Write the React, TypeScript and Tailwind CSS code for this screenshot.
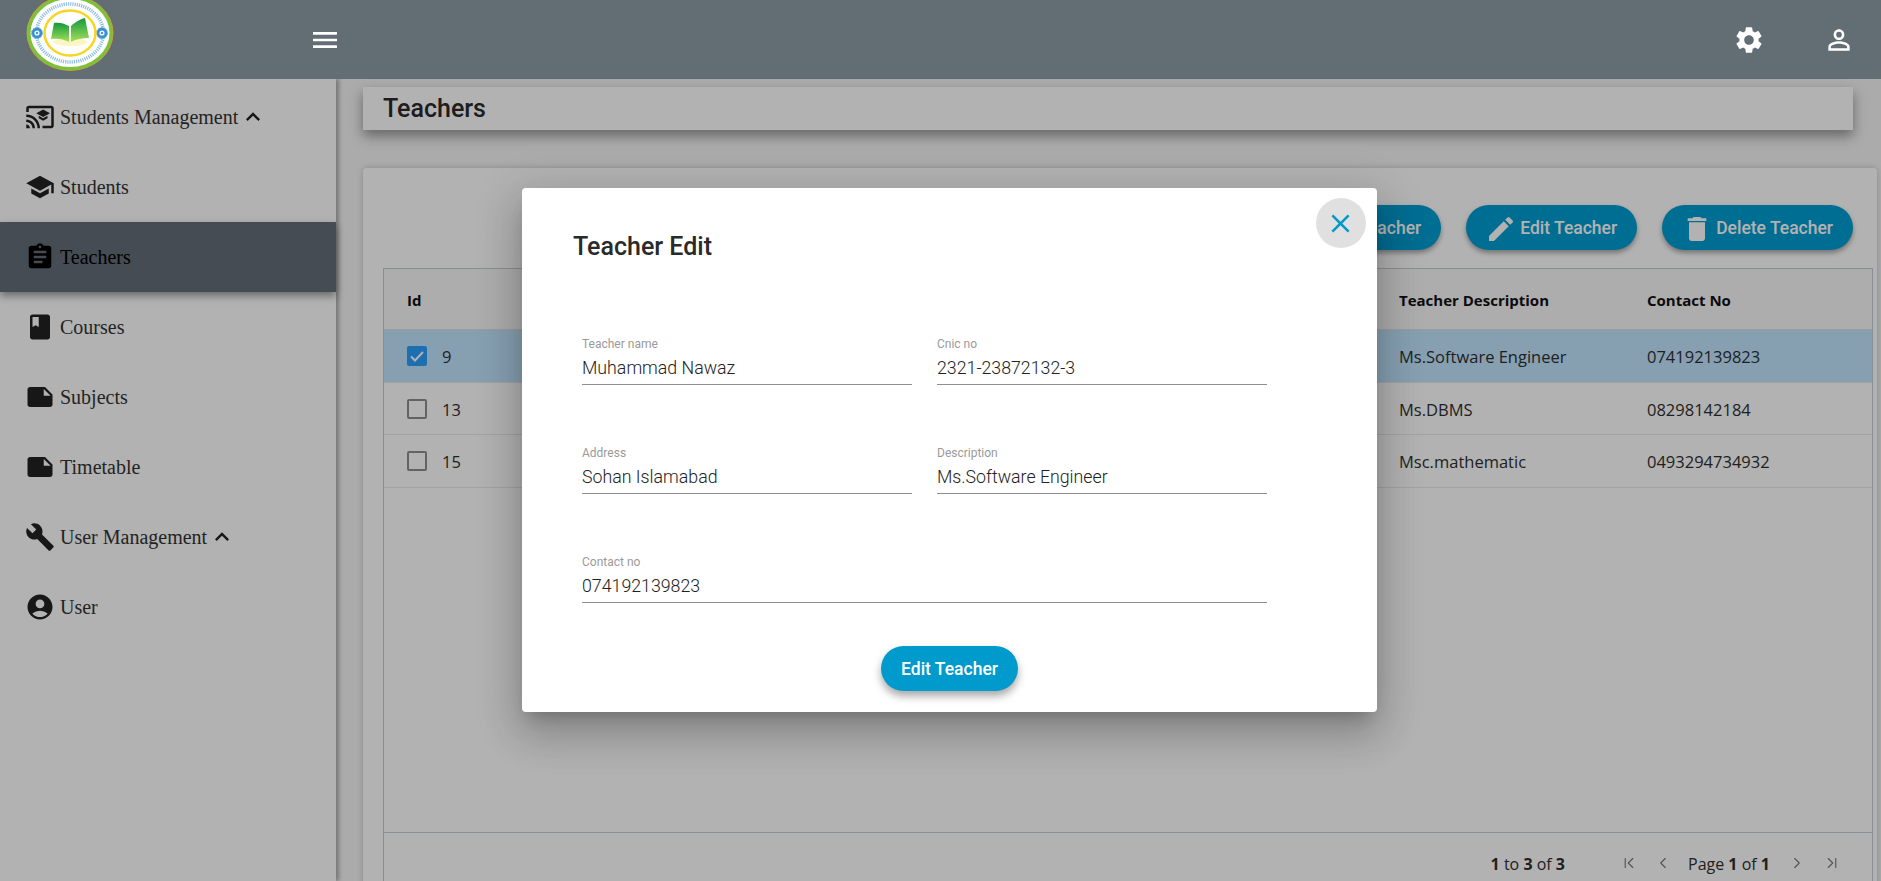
import {
  MdAccountCircle,
  MdAdd,
  MdAssignment,
  MdBook,
  MdBuild,
  MdCastForEducation,
  MdClose,
  MdDelete,
  MdEdit,
  MdKeyboardArrowUp,
  MdMenu,
  MdNote,
  MdPersonOutline,
  MdSchool,
  MdSettings,
} from 'react-icons/md'
import { ChevronFirst, ChevronLast, ChevronLeft, ChevronRight } from 'lucide-react'
import type { IconType } from 'react-icons'

/* Navigation data */
interface NavItem {
  icon: IconType
  label: string
  chevron?: boolean
  active?: boolean
}

const navItems: NavItem[] = [
  { icon: MdCastForEducation, label: 'Students Management', chevron: true },
  { icon: MdSchool, label: 'Students' },
  { icon: MdAssignment, label: 'Teachers', active: true },
  { icon: MdBook, label: 'Courses' },
  { icon: MdNote, label: 'Subjects' },
  { icon: MdNote, label: 'Timetable' },
  { icon: MdBuild, label: 'User Management', chevron: true },
  { icon: MdAccountCircle, label: 'User' },
]

const rows = [
  { id: 9, desc: 'Ms.Software Engineer', contact: '074192139823', selected: true },
  { id: 13, desc: 'Ms.DBMS', contact: '08298142184' },
  { id: 15, desc: 'Msc.mathematic', contact: '0493294734932' },
]

function Flower({ cx, cy }: { cx: number; cy: number }) {
  return (
    <g>
      <circle cx={cx} cy={cy} r="5.5" fill="#3b8fd0" strokeDasharray="2 1" stroke="#6fb2e4" strokeWidth="1" />
      <circle cx={cx} cy={cy} r="2.6" fill="#e8f3fb" />
      <circle cx={cx} cy={cy} r="1.1" fill="#2f7fc4" />
    </g>
  )
}

function Logo() {
  return (
    <svg viewBox="0 0 88 76" className="w-[88px] h-[76px] shrink-0">
      <defs>
        <linearGradient id="page" x1="0" y1="0" x2="0" y2="1">
          <stop offset="0" stopColor="#12993a" />
          <stop offset="1" stopColor="#a6e05a" />
        </linearGradient>
      </defs>
      <ellipse cx="44" cy="38" rx="43.5" ry="38" fill="#dc9a35" />
      <ellipse cx="44" cy="38" rx="42.8" ry="37.3" fill="#7cc13a" />
      <ellipse cx="44" cy="38" rx="39.5" ry="34" fill="#fff" />
      <ellipse cx="44" cy="38" rx="33.5" ry="29" fill="none" stroke="#8fbfe2" strokeWidth="3.5" strokeDasharray="1.2 1" />
      <Flower cx={11} cy={38} />
      <Flower cx={76} cy={38} />
      <ellipse cx="44" cy="38" rx="25.5" ry="22.5" fill="#fff" stroke="#f9d423" strokeWidth="2.5" />
      <ellipse cx="44" cy="47" rx="17" ry="4" fill="#fdf6c4" />
      <path d="M43 31c-5-3-11-4-15-3l-3 16c6-1 13 0 18 3z" fill="url(#page)" />
      <path d="M45 31c3-3 9-7 14-8l4 20c-6 0-13 1-18 4z" fill="url(#page)" />
    </svg>
  )
}

function ToolbarButton({ icon: Icon, label }: { icon: IconType; label: string }) {
  return (
    <button className="flex items-center gap-[3px] h-[45px] pl-[19px] pr-[20px] rounded-full bg-[#009dd1] text-white text-[17.5px] font-medium shadow-[0_3px_5px_rgba(0,0,0,0.35)]">
      <Icon size={32} className="mt-[2px]" />
      <span className="pt-[1px]">{label}</span>
    </button>
  )
}

function Field({ label, value, wide }: { label: string; value: string; wide?: boolean }) {
  return (
    <div className={wide ? 'col-span-2 border-b border-[#8f8f8f]' : 'border-b border-[#8f8f8f]'}>
      <div className="text-[12px] leading-[16px] text-[#9a9a9a]">{label}</div>
      <div className="text-[17.75px] leading-[32px] font-light text-[#222]">{value}</div>
    </div>
  )
}

export default function App() {
  return (
    <div className="relative flex flex-col h-screen overflow-hidden bg-[#f5f5f5] font-['Roboto',sans-serif]">
      {/* Top bar sits above the backdrop */}
      <header className="relative z-20 flex items-center h-[79px] shrink-0 bg-[#626d74] text-white">
        <div className="ml-[26px] -mt-[13px]">
          <Logo />
        </div>
        <MdMenu size={32} className="ml-[195px] mt-[1px]" />
        <MdSettings size={32} className="ml-auto" />
        <MdPersonOutline size={32} className="ml-[58px] mr-[26px]" />
      </header>

      <div className="flex flex-1 min-h-0">
        {/* Sidebar */}
        <aside className="w-[336px] shrink-0 bg-white pt-[3px] shadow-[3px_0_4px_rgba(0,0,0,0.3)] z-[1] font-['Liberation_Serif',serif] text-[20px] text-[#333]">
          {navItems.map((item) => (
            <div
              key={item.label}
              className={
                item.active
                  ? 'flex items-center h-[70px] pl-[25px] bg-[#636d78] text-black shadow-[0_4px_8px_rgba(0,0,0,0.4)] relative'
                  : 'flex items-center h-[70px] pl-[25px]'
              }
            >
              <item.icon size={30} className={item.active ? 'text-black shrink-0' : 'text-[#222] shrink-0'} />
              <span className="ml-[5px]">{item.label}</span>
              {item.chevron && <MdKeyboardArrowUp size={28} className="ml-[1px] text-[#222]" />}
            </div>
          ))}
        </aside>

        {/* Main content */}
        <main className="flex-1 min-w-0 pl-[27px] pr-[4px] pt-[8px]">
          <div className="flex items-center h-[43px] mr-[24px] pl-[20px] bg-white shadow-[0_6px_12px_rgba(0,0,0,0.4)] text-[25px] font-medium text-[#2a2a2a]">
            Teachers
          </div>

          <div className="mt-[38px] pt-[37px] pl-[20px] pr-[4px] bg-white rounded-t shadow-[0_0_6px_rgba(0,0,0,0.2)]">
            <div className="flex justify-end gap-[25px] pr-[20px]">
              <ToolbarButton icon={MdAdd} label="Add Teacher" />
              <ToolbarButton icon={MdEdit} label="Edit Teacher" />
              <ToolbarButton icon={MdDelete} label="Delete Teacher" />
            </div>

            <div className="mt-[18px] border border-[#c6ccda] font-['Open_Sans',sans-serif] text-[16.5px] text-[#2f2f2f]">
              <div className="flex items-center h-[61px] bg-[#f8f8f8] border-b border-[#dcdfe3] font-bold text-[15px] text-[#111]">
                <div className="flex-1 pl-[23px] pt-[2px]">Id</div>
                <div className="w-[248px] pt-[2px]">Teacher Description</div>
                <div className="w-[225px] pt-[2px]">Contact No</div>
              </div>
              <div className="h-[503px] border-b border-[#c6ccda]">
                {rows.map((row) => (
                  <div
                    key={row.id}
                    className={
                      row.selected
                        ? 'flex items-center h-[52.7px] bg-[#c1e5ff] border-b border-[#e8e8ee]'
                        : 'flex items-center h-[52.7px] border-b border-[#e8e8ee]'
                    }
                  >
                    <div className="flex flex-1 items-center pl-[23px]">
                      {row.selected ? (
                        <span className="flex items-center justify-center w-[20px] h-[20px] rounded-[2px] bg-[#2aa0ff]">
                          <svg viewBox="0 0 20 20" className="w-[20px] h-[20px]" fill="none" stroke="#fff" strokeWidth="2">
                            <path d="M4 10.5l4 4 8-8.5" />
                          </svg>
                        </span>
                      ) : (
                        <span className="w-[20px] h-[20px] rounded-[2px] border-2 border-[#8f8f8f] bg-white" />
                      )}
                      <span className="ml-[15px] pt-[3px]">{row.id}</span>
                    </div>
                    <div className="w-[248px] pt-[3px]">{row.desc}</div>
                    <div className="w-[225px] pt-[3px]">{row.contact}</div>
                  </div>
                ))}
              </div>
              <div className="flex items-center justify-end h-[60px] pr-[31px] text-[16px]">
                <span className="pt-[1px]">
                  <b>1</b> to <b>3</b> of <b>3</b>
                </span>
                <ChevronFirst size={18} strokeWidth={1.5} className="ml-[55px] text-[#777]" />
                <ChevronLeft size={18} strokeWidth={1.5} className="ml-[16px] text-[#777]" />
                <span className="ml-[16px] pt-[1px]">
                  Page <b>1</b> of <b>1</b>
                </span>
                <ChevronRight size={18} strokeWidth={1.5} className="ml-[18px] text-[#777]" />
                <ChevronLast size={18} strokeWidth={1.5} className="ml-[17px] text-[#777]" />
              </div>
            </div>
          </div>
        </main>
      </div>

      {/* Backdrop */}
      <div className="absolute inset-0 z-10 bg-black/30" />

      {/* Dialog */}
      <div className="absolute z-30 left-[522px] top-[188px] w-[855px] h-[524px] pt-[43px] rounded-[4px] bg-white shadow-[0_11px_15px_-7px_rgba(0,0,0,0.2),0_24px_38px_3px_rgba(0,0,0,0.14),0_9px_46px_8px_rgba(0,0,0,0.12)]">
        <button className="absolute right-[11px] top-[10px] flex items-center justify-center w-[50px] h-[50px] rounded-full bg-[#e0e0e0] text-[#0099cc]">
          <MdClose size={31} className="-ml-[1px] mt-[1px]" />
        </button>
        <h2 className="ml-[51px] text-[25px] leading-[32px] font-medium text-[#2a2a2a]">Teacher Edit</h2>
        <div className="grid grid-cols-[330px_330px] gap-x-[25px] gap-y-[60px] ml-[60px] mt-[73px] w-[685px]">
          <Field label="Teacher name" value="Muhammad Nawaz" />
          <Field label="Cnic no" value="2321-23872132-3" />
          <Field label="Address" value="Sohan Islamabad" />
          <Field label="Description" value="Ms.Software Engineer" />
          <Field label="Contact no" value="074192139823" wide />
        </div>
        <div className="flex justify-center mt-[43px]">
          <button className="h-[45px] w-[137px] pt-[1px] rounded-full bg-[#009bcc] text-white text-[17.5px] font-medium shadow-[0_5px_8px_rgba(0,0,0,0.35)]">
            Edit Teacher
          </button>
        </div>
      </div>
    </div>
  )
}
